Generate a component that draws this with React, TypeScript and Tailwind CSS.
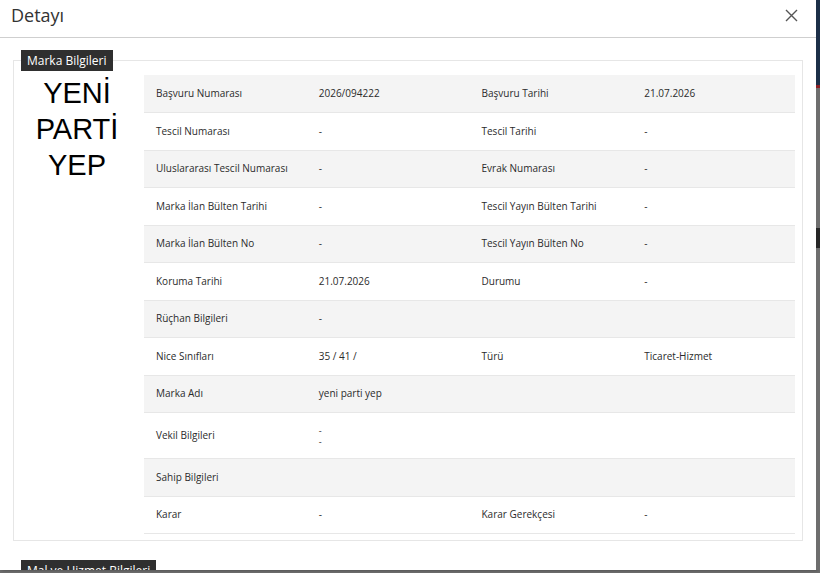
import React from "react";

type Row = {
  label: string;
  value: React.ReactNode;
  label2?: string;
  value2?: string;
  tall?: boolean;
};

const rows: Row[] = [
  { label: "Başvuru Numarası", value: "2026/094222", label2: "Başvuru Tarihi", value2: "21.07.2026" },
  { label: "Tescil Numarası", value: "-", label2: "Tescil Tarihi", value2: "-" },
  { label: "Uluslararası Tescil Numarası", value: "-", label2: "Evrak Numarası", value2: "-" },
  { label: "Marka İlan Bülten Tarihi", value: "-", label2: "Tescil Yayın Bülten Tarihi", value2: "-" },
  { label: "Marka İlan Bülten No", value: "-", label2: "Tescil Yayın Bülten No", value2: "-" },
  { label: "Koruma Tarihi", value: "21.07.2026", label2: "Durumu", value2: "-" },
  { label: "Rüçhan Bilgileri", value: "-" },
  { label: "Nice Sınıfları", value: "35 / 41 /", label2: "Türü", value2: "Ticaret-Hizmet" },
  { label: "Marka Adı", value: "yeni parti yep" },
  {
    label: "Vekil Bilgileri",
    value: (
      <div className="flex flex-col text-[9px] leading-[11px]">
        <span>-</span>
        <span>-</span>
      </div>
    ),
    tall: true,
  },
  { label: "Sahip Bilgileri", value: "" },
  { label: "Karar", value: "-", label2: "Karar Gerekçesi", value2: "-" },
];

function CloseIcon() {
  return (
    <svg width="13" height="13" viewBox="0 0 13 13" fill="none" stroke="#555" strokeWidth="1.4">
      <path d="M1 1L12 12M12 1L1 12" />
    </svg>
  );
}

export default function App() {
  return (
    <div className="flex h-[573px] w-[820px] flex-col overflow-hidden bg-[#6c6c6c] font-['Open_Sans',sans-serif] text-[#333]">
      <div className="flex h-[570px]">
        {/* modal */}
        <div className="flex h-full w-[816px] flex-col overflow-hidden bg-white shadow-[2px_0_3px_rgba(0,0,0,0.35)]">
          <div className="flex h-[38px] shrink-0 items-start justify-between border-b border-[#cfcfcf] pl-[11px] pr-[18px]">
            <h2 className="pt-[3px] text-[18px] leading-[24px] text-[#333]">Detayı</h2>
            <button className="pt-[9px]">
              <CloseIcon />
            </button>
          </div>

          <div className="flex flex-col px-[13px] pt-[22px]">
            {/* Marka Bilgileri */}
            <div className="relative border border-[#e6e6e6] pb-[6px] pr-[7px] pt-[14px]">
              <div className="absolute -top-[11px] left-[7px] bg-[#2f2f2f] px-[6px] text-[12px] leading-[21px] text-white">
                Marka Bilgileri
              </div>
              <div className="flex">
                <div className="w-[130px] shrink-0 pr-[4px] text-center font-['Liberation_Sans',Arial,sans-serif] text-[29px] leading-[36px] text-black">
                  <div>YENİ</div>
                  <div>PARTİ</div>
                  <div>YEP</div>
                </div>
                <table className="w-[651px] table-fixed border-collapse text-[10px] text-[#2b2b2b]">
                  <tbody>
                    {rows.map((r, i) => (
                      <tr
                        key={i}
                        className={`${r.tall ? "h-[46px]" : "h-[37.5px]"} border-b border-[#e7e7e7] ${
                          i % 2 === 0 ? "bg-[#f4f4f4]" : "bg-white"
                        }`}
                      >
                        <td className="px-[12px] align-middle">{r.label}</td>
                        <td className="px-[12px] align-middle">{r.value}</td>
                        <td className="px-[12px] align-middle">{r.label2 ?? ""}</td>
                        <td className="px-[12px] align-middle">{r.value2 ?? ""}</td>
                      </tr>
                    ))}
                  </tbody>
                </table>
              </div>
            </div>

            {/* Mal ve Hizmet Bilgileri */}
            <div className="relative mt-[29px] h-[40px] border border-[#e6e6e6]">
              <div className="absolute -top-[11px] left-[7px] bg-[#2f2f2f] px-[6px] text-[12px] leading-[21px] text-white">
                Mal ve Hizmet Bilgileri
              </div>
            </div>
          </div>
        </div>

        {/* backdrop edge */}
        <div className="flex w-[4px] flex-col">
          <div className="h-[85px] bg-[#1c2f48]" />
          <div className="h-[3px] bg-[#8a1f24]" />
          <div className="h-[140px] bg-[#6e6e6e]" />
          <div className="h-[20px] bg-[#262626]" />
          <div className="flex-1 bg-[#6e6e6e]" />
        </div>
      </div>
    </div>
  );
}
